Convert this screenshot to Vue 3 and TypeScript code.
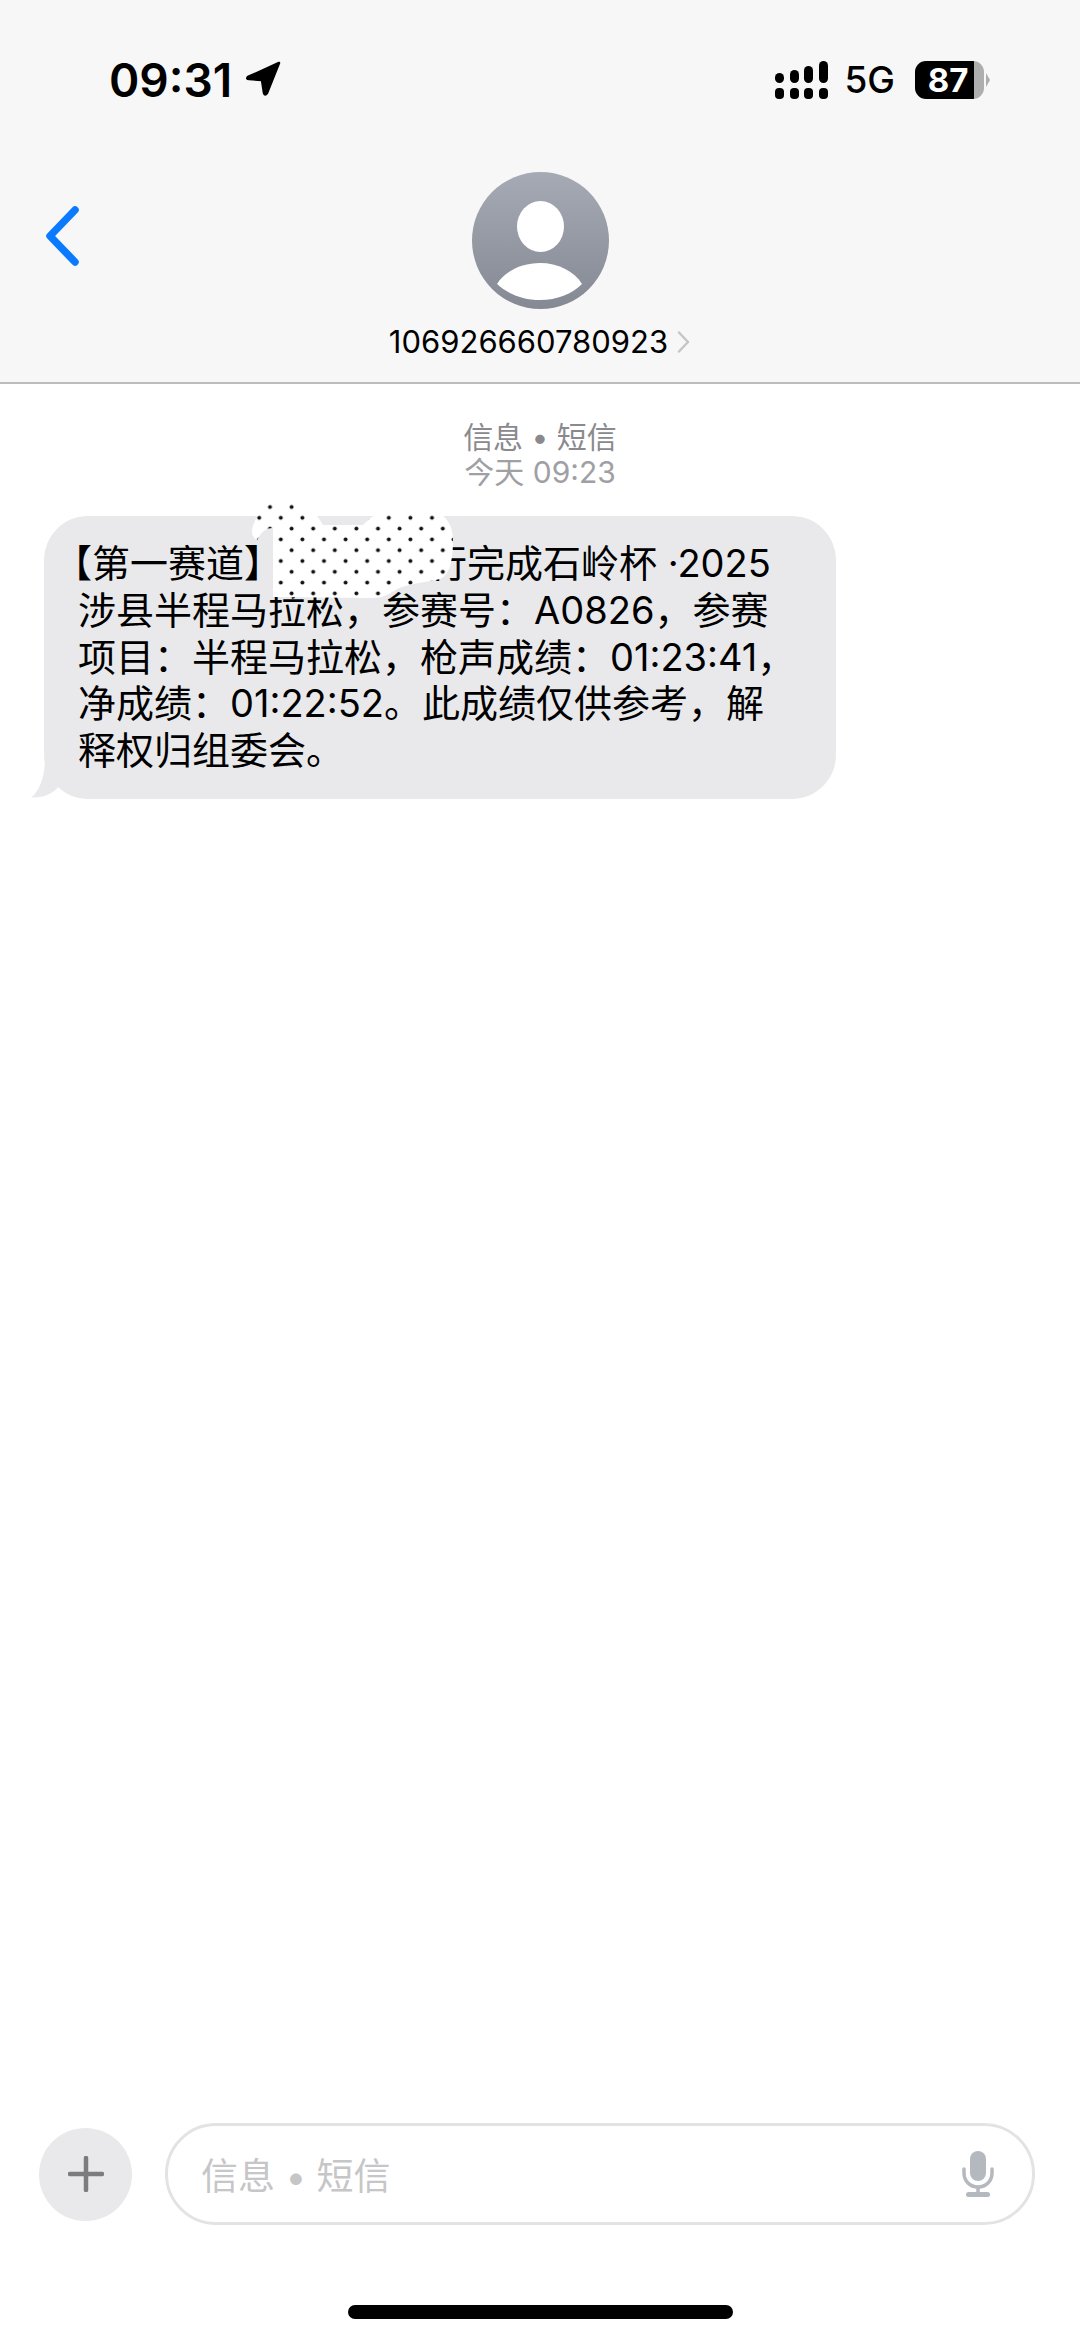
<script setup lang="ts">
const sender = '106926660780923'
const service = '信息 • 短信'
const signalBars = [
  { x: 0, y: 12, h: 10 },
  { x: 15, y: 9, h: 13 },
  { x: 29, y: 5, h: 17 },
  { x: 44, y: 0, h: 22 },
]
</script>

<template>
  <div class="screen">
    <header class="top">
      <div class="status">
        <div class="clock">
          <span class="time">09:31</span>
          <svg class="location" width="38" height="38" viewBox="0 0 38 38">
            <path d="M34 3 L3 17 Q1 19 4 19 L17 20 L19 33 Q20 36 22 33 Z" fill="#000" stroke="#000" stroke-width="2.5" stroke-linejoin="round" />
          </svg>
        </div>
        <div class="indicators">
          <svg class="signal" width="53" height="38" viewBox="0 0 53 38">
            <rect v-for="bar in signalBars" :key="bar.x" :x="bar.x" :y="bar.y" width="9" :height="bar.h" rx="4.5" fill="#000" />
            <rect v-for="bar in signalBars" :key="'dot' + bar.x" :x="bar.x" y="27" width="9" height="11" rx="4" fill="#000" />
          </svg>
          <span class="network">5G</span>
          <div class="battery"><span>87</span></div>
          <span class="battery-tip"></span>
        </div>
      </div>

      <div class="nav">
        <svg class="back" width="38" height="62" viewBox="0 0 38 62">
          <path d="M31 5 L6 31 L31 57" fill="none" stroke="#0a7aff" stroke-width="7.5" stroke-linecap="round" stroke-linejoin="round" />
        </svg>
        <svg class="avatar" width="137" height="137" viewBox="0 0 137 137">
          <defs>
            <linearGradient id="avatarFill" x1="0" y1="0" x2="0" y2="1">
              <stop offset="0" stop-color="#a6aab5" />
              <stop offset="1" stop-color="#858994" />
            </linearGradient>
          </defs>
          <circle cx="68.5" cy="68.5" r="68.5" fill="url(#avatarFill)" />
          <ellipse cx="68.5" cy="54.5" rx="23.5" ry="25.5" fill="#fff" />
          <path d="M25 112 C33 99 50 91 68 91 C86 91 102 99 110 112 C100 122 85 128 68 128 C51 128 36 122 25 112 Z" fill="#fff" />
        </svg>
      </div>

      <div class="sender">
        <span>{{ sender }}</span>
        <svg width="14" height="22" viewBox="0 0 14 22">
          <path d="M2 1.5 L11 11 L2 20.5" fill="none" stroke="#c6c6c8" stroke-width="2.5" stroke-linecap="round" stroke-linejoin="round" />
        </svg>
      </div>
    </header>

    <main class="thread">
      <div class="meta">
        <div>{{ service }}</div>
        <div class="meta-time">今天 09:23</div>
      </div>

      <div class="bubble-row">
        <div class="bubble">
          <svg class="tail" width="52" height="40" viewBox="0 0 52 40">
            <path d="M16 0 C16 18 10 33 2 38.5 C14 39 24 35 30 27 C36 34 42 37 52 38 L52 0 Z" fill="#e9e9eb" />
          </svg>
          <p class="message">
            <span class="open-bracket">【</span>第一赛道】<span class="hidden-run"></span>行完成石岭杯 ·2025<br />
            涉县半程马拉松，参赛号：A0826，参赛<br />
            项目：半程马拉松，枪声成绩：01:23:41，<br />
            净成绩：01:22:52。此成绩仅供参考，解<br />
            释权归组委会。
          </p>
        </div>
        <svg class="redaction" width="210" height="105" viewBox="0 0 210 105">
          <defs>
            <pattern id="dots" x="14.6" y="1.6" width="21.6" height="21.6" patternUnits="userSpaceOnUse">
              <circle cx="5.4" cy="5.4" r="2" fill="#111" />
              <circle cx="16.2" cy="16.2" r="2" fill="#111" />
            </pattern>
          </defs>
          <path d="M23 97 L23 28 Q12 28 7 41 Q1 35 2 30 C5 15 15 4 30 0 C50 0 60 3 73 25 L113 25 C118 20 122 16 130 13 L180 10 C195 12 203 25 203 40 C203 60 200 75 190 79 C175 83 155 83 142 92 C135 97 128 98 120 98 Z" fill="#fff" />
          <path d="M23 97 L23 28 Q12 28 7 41 Q1 35 2 30 C5 15 15 4 30 0 C50 0 60 3 73 25 L113 25 C118 20 122 16 130 13 L180 10 C195 12 203 25 203 40 C203 60 200 75 190 79 C175 83 155 83 142 92 C135 97 128 98 120 98 Z" fill="url(#dots)" />
        </svg>
      </div>
    </main>

    <footer class="composer">
      <div class="input-row">
        <button class="add" type="button" aria-label="add">
          <svg width="36" height="36" viewBox="0 0 36 36">
            <path d="M18 2 V34 M2 18 H34" stroke="#7c7c80" stroke-width="4.5" stroke-linecap="round" />
          </svg>
        </button>
        <div class="field">
          <span class="placeholder">{{ service }}</span>
          <svg class="mic" width="32" height="46" viewBox="0 0 32 46">
            <rect x="8" y="0" width="16" height="30" rx="8" fill="#b4b8bf" />
            <path d="M2 18 V22 C2 30 8 36 16 36 C24 36 30 30 30 22 V18" fill="none" stroke="#b4b8bf" stroke-width="3.5" stroke-linecap="round" />
            <path d="M16 36 V42" stroke="#b4b8bf" stroke-width="3.5" />
            <rect x="4" y="41" width="24" height="5" rx="2.5" fill="#b4b8bf" />
          </svg>
        </div>
      </div>
      <div class="home-bar"></div>
    </footer>
  </div>
</template>

<style scoped>
.screen {
  width: 1080px;
  height: 2341px;
  display: flex;
  flex-direction: column;
  background: #fff;
  color: #000;
  font-family: Inter, "Noto Sans CJK SC", sans-serif;
  overflow: hidden;
}

.top {
  background: #f7f7f7;
  border-bottom: 2px solid #bcbcbe;
  height: 384px;
  box-sizing: border-box;
  display: flex;
  flex-direction: column;
}

.status {
  display: flex;
  justify-content: space-between;
  align-items: center;
  height: 40px;
  margin-top: 60px;
  padding: 0 90px 0 109px;
}

.clock {
  display: flex;
  align-items: center;
  gap: 13px;
}

.time {
  font-size: 46px;
  font-weight: 600;
  line-height: 40px;
}

.location {
  margin-top: -2px;
}

.indicators {
  display: flex;
  align-items: center;
}

.signal {
  margin-right: 16px;
}

.network {
  font-size: 37px;
  font-weight: 500;
  line-height: 40px;
  margin-right: 20px;
}

.battery {
  width: 69px;
  height: 38px;
  border-radius: 11px;
  background: linear-gradient(90deg, #000 86%, #aeaeae 86%);
  color: #fff;
  font-size: 33px;
  font-weight: 700;
  line-height: 38px;
}

.battery span {
  display: block;
  width: 66px;
  text-align: center;
}

.battery-tip {
  width: 0;
  height: 0;
  margin-left: 2px;
  border-left: 4px solid #aeaeae;
  border-top: 7px solid transparent;
  border-bottom: 7px solid transparent;
}

.nav {
  display: grid;
  grid-template-columns: 1fr auto 1fr;
  align-items: center;
  margin-top: 72px;
}

.back {
  margin-left: 44px;
  margin-bottom: 10px;
}

.avatar {
  display: block;
}

.sender {
  display: flex;
  justify-content: center;
  align-items: center;
  gap: 9px;
  height: 40px;
  margin-top: 13px;
  font-size: 31px;
  line-height: 40px;
}

.thread {
  flex: 1;
}

.meta {
  padding-top: 36px;
  text-align: center;
  font-size: 30px;
  line-height: 35px;
  color: #8a8a8e;
}

.meta-time {
  color: #a0a0a4;
}

.bubble-row {
  position: relative;
  margin-top: 26px;
  margin-left: 44px;
  width: 792px;
}

.bubble {
  position: relative;
  background: #e9e9eb;
  border-radius: 44px;
  padding: 24px 0 25px 34px;
}

.tail {
  position: absolute;
  left: -15px;
  bottom: -0.5px;
}

.message {
  position: relative;
  margin: 0;
  font-size: 38px;
  line-height: 46.8px;
  white-space: nowrap;
}

.open-bracket {
  margin-left: -24px;
}

.hidden-run {
  display: inline-block;
  width: 147px;
}

.redaction {
  position: absolute;
  left: 206px;
  top: -16px;
}

.composer {
  display: flex;
  flex-direction: column;
  padding-bottom: 22px;
}

.input-row {
  display: flex;
  align-items: center;
  gap: 33px;
  padding: 0 45px 0 39px;
}

.add {
  flex: none;
  width: 93px;
  height: 93px;
  padding: 0;
  border: none;
  border-radius: 50%;
  background: #e9e9eb;
  display: flex;
  align-items: center;
  justify-content: center;
}

.field {
  flex: 1;
  height: 102px;
  box-sizing: border-box;
  border: 3px solid #e3e3e5;
  border-radius: 51px;
  display: flex;
  align-items: center;
  justify-content: space-between;
  padding: 0 38px 0 33px;
}

.placeholder {
  font-size: 37px;
  color: #c6c6c8;
}

.mic {
  display: block;
}

.home-bar {
  width: 385px;
  height: 14px;
  border-radius: 7px;
  background: #000;
  margin: 80px auto 0;
}
</style>
